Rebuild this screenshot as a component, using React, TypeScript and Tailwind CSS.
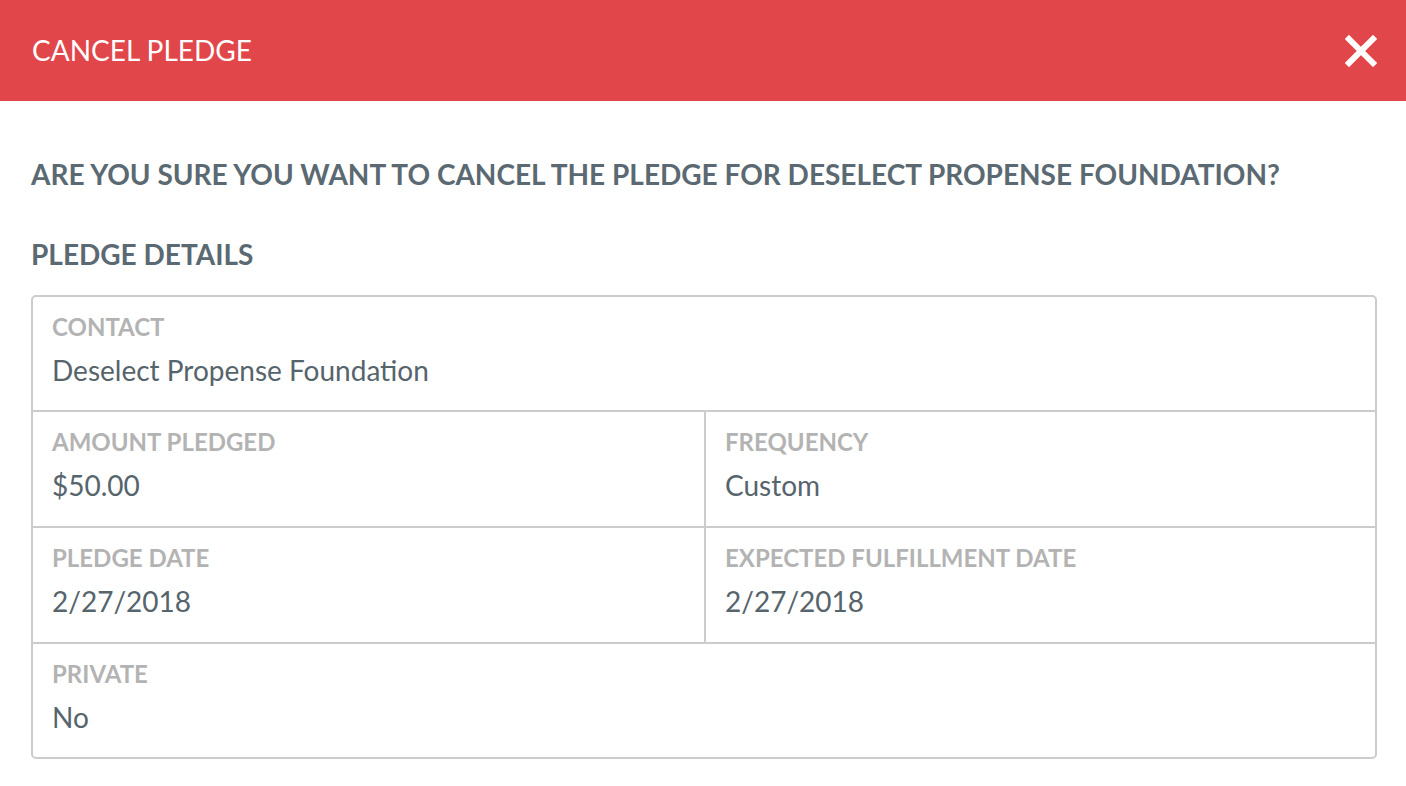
import React from "react";

const font = { fontFamily: "Lato, 'Open Sans', sans-serif" };

type Detail = { label: string; value: string };

const DetailCell = ({ label, value, divider }: Detail & { divider?: boolean }) => (
  <div className={`pl-[19px] pt-[16px] ${divider ? "border-r-2 border-[#cccccc]" : ""}`}>
    <div className="text-[24px] leading-[28px] font-bold text-[#b3b3b3] uppercase">{label}</div>
    <div className="mt-[12px] text-[28px] leading-[34px] text-[#56646c]">{value}</div>
  </div>
);

const CloseIcon = () => (
  <svg width="32" height="32" viewBox="0 0 32 32" aria-hidden="true">
    <path d="M4 4 L28 28 M28 4 L4 28" stroke="#ffffff" strokeWidth="6" strokeLinecap="square" />
  </svg>
);

export default function App() {
  return (
    <div className="w-[1406px] h-[786px] bg-white" style={font}>
      <div className="h-[101px] bg-[#e1464a] flex items-center justify-between pl-8 pr-[29px]">
        <h1 className="text-[28px] leading-[34px] text-white -mt-[2px]">CANCEL PLEDGE</h1>
        <button className="flex items-center justify-center">
          <CloseIcon />
        </button>
      </div>

      <div className="pl-[31px] pr-[29px]">
        <p className="mt-[56px] text-[28px] leading-[34px] font-bold text-[#5a6972]">
          ARE YOU SURE YOU WANT TO CANCEL THE PLEDGE FOR DESELECT PROPENSE FOUNDATION?
        </p>
        <h2 className="mt-[46px] text-[28px] leading-[34px] font-bold text-[#5a6972]">PLEDGE DETAILS</h2>

        <div className="mt-[24px] border-2 border-[#cccccc] rounded-[5px]">
          <div className="h-[115px] border-b-2 border-[#cccccc]">
            <DetailCell label="Contact" value="Deselect Propense Foundation" />
          </div>
          <div className="h-[116px] border-b-2 border-[#cccccc] grid grid-cols-[673px_1fr]">
            <DetailCell label="Amount Pledged" value="$50.00" divider />
            <DetailCell label="Frequency" value="Custom" />
          </div>
          <div className="h-[116px] border-b-2 border-[#cccccc] grid grid-cols-[673px_1fr]">
            <DetailCell label="Pledge Date" value="2/27/2018" divider />
            <DetailCell label="Expected Fulfillment Date" value="2/27/2018" />
          </div>
          <div className="h-[113px]">
            <DetailCell label="Private" value="No" />
          </div>
        </div>
      </div>
    </div>
  );
}
